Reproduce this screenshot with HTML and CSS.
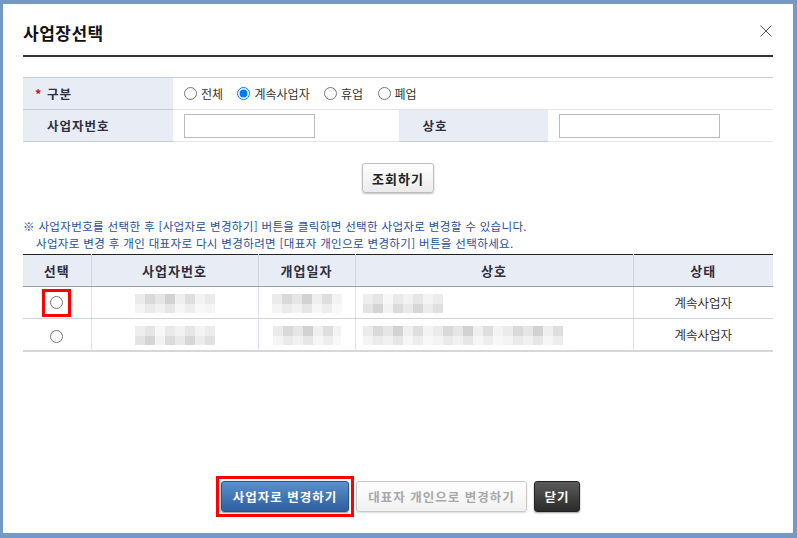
FILE: index.html
```html
<!DOCTYPE html>
<html lang="ko">
<head>
    <meta charset="UTF-8">
    <title>사업장선택</title>
    <link rel="stylesheet" href="styles.css">
</head>
<body>
    <div class="popup">
        <div class="popup-head">
            <h1 class="popup-title">사업장선택</h1>
            <button type="button" class="btn-close" aria-label="닫기">
                <svg viewBox="0 0 12 12" width="12" height="12">
                    <path d="M0.5 0.5L11.5 11.5M11.5 0.5L0.5 11.5" stroke="#4c5477" stroke-width="1" fill="none"/>
                </svg>
            </button>
        </div>

        <table class="search-table">
            <colgroup>
                <col class="col-th">
                <col class="col-td">
                <col class="col-th">
                <col class="col-td">
            </colgroup>
            <tr>
                <th><span class="req">*</span>구분</th>
                <td colspan="3" class="radio-cell">
                    <label class="radio-item"><input type="radio" name="gubun">전체</label>
                    <label class="radio-item"><input type="radio" name="gubun" checked>계속사업자</label>
                    <label class="radio-item"><input type="radio" name="gubun">휴업</label>
                    <label class="radio-item"><input type="radio" name="gubun">폐업</label>
                </td>
            </tr>
            <tr>
                <th>사업자번호</th>
                <td><input type="text" class="input-bizno"></td>
                <th>상호</th>
                <td><input type="text" class="input-name"></td>
            </tr>
        </table>

        <div class="search-btn-area">
            <button type="button" class="btn-search">조회하기</button>
        </div>

        <div class="notice">
            <p>※ 사업자번호를 선택한 후 [사업자로 변경하기] 버튼을 클릭하면 선택한 사업자로 변경할 수 있습니다.</p>
            <p class="indent">사업자로 변경 후 개인 대표자로 다시 변경하려면 [대표자 개인으로 변경하기] 버튼을 선택하세요.</p>
        </div>

        <table class="list-table">
            <colgroup>
                <col class="col-sel">
                <col class="col-bizno">
                <col class="col-date">
                <col class="col-name">
                <col class="col-state">
            </colgroup>
            <thead>
                <tr>
                    <th>선택</th>
                    <th>사업자번호</th>
                    <th>개업일자</th>
                    <th>상호</th>
                    <th>상태</th>
                </tr>
            </thead>
            <tbody>
                <tr>
                    <td><span class="focus-box"><input type="radio" name="biz"></span></td>
                    <td><span class="blur blur-80"></span></td>
                    <td><span class="blur blur-70"></span></td>
                    <td class="left"><span class="blur blur-80 alt"></span></td>
                    <td>계속사업자</td>
                </tr>
                <tr>
                    <td><input type="radio" name="biz"></td>
                    <td><span class="blur blur-80 alt"></span></td>
                    <td><span class="blur blur-68"></span></td>
                    <td class="left"><span class="blur blur-200"></span></td>
                    <td>계속사업자</td>
                </tr>
            </tbody>
        </table>

        <div class="popup-foot">
            <span class="focus-box btn-wrap"><button type="button" class="btn btn-blue">사업자로 변경하기</button></span>
            <button type="button" class="btn btn-light">대표자 개인으로 변경하기</button>
            <button type="button" class="btn btn-dark">닫기</button>
        </div>
    </div>
</body>
</html>
```

FILE: styles.css
```css
*{
    box-sizing: border-box;
}
body{
    margin: 0;
    padding: 4px 4px 5px 3px;
    background-color: #7499c4;
    font-family: "Noto Sans CJK KR", "Noto Sans", sans-serif;
    font-size: 12px;
    color: #333;
}
.popup{
    width: 790px;
    height: 529px;
    background-color: #fff;
    padding: 0 20px 16px;
    display: flex;
    flex-direction: column;
}
.popup-head{
    height: 53px;
    padding-top: 6px;
    border-bottom: 2px solid #333;
    display: flex;
    align-items: center;
    justify-content: space-between;
}
.popup-title{
    margin: 0;
    font-size: 17px;
    font-weight: bold;
    color: #111;
    letter-spacing: 0.5px;
}
.btn-close{
    border: 0;
    padding: 0;
    margin: 0 1px 4px 0;
    background: none;
    width: 12px;
    height: 12px;
    display: flex;
    cursor: pointer;
}

/* search table */
.search-table{
    width: 100%;
    margin-top: 20px;
    border-collapse: collapse;
    table-layout: fixed;
    border-top: 1px solid #c6cdd8;
    border-bottom: 1px solid #c6cdd8;
}
.col-th{
    width: 150px;
}
.col-td{
    width: 225px;
}
.search-table th{
    height: 32px;
    padding: 0 0 0 24px;
    background-color: #e8ecf4;
    text-align: left;
    font-size: 12.5px;
    font-weight: bold;
    color: #2e2e3e;
    border-bottom: 1px solid #c6cdd8;
    border-left: 1px solid #fff;
    letter-spacing: 1px;
}
.search-table th:first-child{
    border-left: 0;
}
.search-table td{
    height: 32px;
    padding: 0 0 0 11px;
    border-bottom: 1px solid #e6e6e6;
}
.req{
    display: inline-block;
    width: 12px;
    margin-left: -12px;
    color: #c8102e;
}
.radio-cell{
    font-size: 12px;
    color: #333;
}
.radio-item{
    display: inline-flex;
    align-items: center;
    margin-right: 11px;
}
.radio-item input{
    width: 13px;
    height: 13px;
    margin: 0 4px 0 0;
}
.search-table input[type="text"]{
    height: 24px;
    border: 1px solid #bbb;
    padding: 0 4px;
    display: block;
}
.input-bizno{
    width: 131px;
}
.input-name{
    width: 161px;
}

.search-btn-area{
    margin-top: 21px;
    display: flex;
    justify-content: center;
}
.btn-search{
    width: 72px;
    height: 30px;
    border: 1px solid #bdbdbd;
    border-radius: 3px;
    background: linear-gradient(#fff, #ebebeb);
    box-shadow: 0 1px 2px rgba(0,0,0,0.25);
    font-family: inherit;
    font-size: 13px;
    font-weight: bold;
    color: #222;
    letter-spacing: 1px;
    cursor: pointer;
}

.notice{
    margin: 25px 0 2px;
    font-size: 11.5px;
    line-height: 17px;
    color: #1d4f9a;
    letter-spacing: 0.35px;
}
.notice p{
    margin: 0;
    height: 17px;
    white-space: nowrap;
}
.notice .indent{
    padding-left: 13px;
}

/* list table */
.list-table{
    width: 100%;
    border-collapse: collapse;
    table-layout: fixed;
    border-top: 1px solid #222;
    border-bottom: 2px solid #d3d7de;
}
.col-sel{ width: 68px; }
.col-bizno{ width: 167px; }
.col-date{ width: 97px; }
.col-name{ width: 278px; }
.col-state{ width: 140px; }
.list-table th{
    height: 32px;
    background-color: #e8ecf4;
    font-size: 13px;
    font-weight: bold;
    color: #2e2e3e;
    border-left: 1px solid #d0d6df;
    border-bottom: 1px solid #9aa0a8;
    letter-spacing: 1px;
}
.list-table td{
    height: 32px;
    text-align: center;
    font-size: 12.5px;
    color: #333;
    border-left: 1px solid #dde1e7;
    border-bottom: 1px solid #cfd4db;
    padding: 0;
}
.list-table th:first-child,
.list-table td:first-child{
    border-left: 0;
}
.list-table td.left{
    text-align: left;
    padding-left: 7px;
}
.list-table input[type="radio"]{
    width: 13px;
    height: 13px;
    margin: 0;
    vertical-align: middle;
}
.focus-box{
    display: inline-flex;
    align-items: center;
    justify-content: center;
    border: 3px solid #f00;
}
td .focus-box{
    width: 29px;
    height: 28px;
    vertical-align: middle;
}

.blur{
    display: inline-block;
    height: 19px;
    vertical-align: middle;
    background:
        linear-gradient(rgba(255,255,255,0) 50%, rgba(255,255,255,0.45) 50%),
        repeating-linear-gradient(90deg, #ebebeb 0 10px, #d9d9d9 10px 20px, #e6e6e6 20px 30px, #d2d2d2 30px 40px, #efefef 40px 50px, #dedede 50px 60px, #f3f3f3 60px 70px);
}
.blur.alt{
    background:
        linear-gradient(rgba(255,255,255,0.4) 50%, rgba(255,255,255,0) 50%),
        repeating-linear-gradient(90deg, #e3e3e3 0 10px, #d4d4d4 10px 20px, #f2f2f2 20px 30px, #dbdbdb 30px 40px, #e9e9e9 40px 50px, #d6d6d6 50px 60px, #ececec 60px 70px, #e0e0e0 70px 80px);
}
.blur-80{ width: 80px; }
.blur-70{ width: 70px; }
.blur-68{ width: 68px; }
.blur-200{ width: 200px; }

/* footer buttons */
.popup-foot{
    margin-top: auto;
    display: flex;
    justify-content: center;
    align-items: center;
}
.btn-wrap{
    padding: 2px;
    margin-right: 2px;
}
.btn{
    height: 31px;
    border-radius: 3px;
    font-family: inherit;
    font-size: 12.5px;
    font-weight: bold;
    letter-spacing: 1px;
    padding: 0;
    cursor: pointer;
}
.btn-blue{
    width: 128px;
    border: 1px solid #2a5590;
    background: linear-gradient(#5a8fcd, #2e5f9f);
    box-shadow: 0 1px 2px rgba(0,0,0,0.45);
    color: #fff;
}
.btn-light{
    width: 171px;
    border: 1px solid #c8c8c8;
    background: linear-gradient(#fff, #f0f0f0);
    box-shadow: 0 1px 2px rgba(0,0,0,0.15);
    color: #a8a8a8;
}
.btn-dark{
    width: 46px;
    margin-left: 7px;
    border: 1px solid #222;
    background: linear-gradient(#5a5a5a, #2b2b2b);
    box-shadow: 0 1px 2px rgba(0,0,0,0.4);
    color: #fff;
}
```
